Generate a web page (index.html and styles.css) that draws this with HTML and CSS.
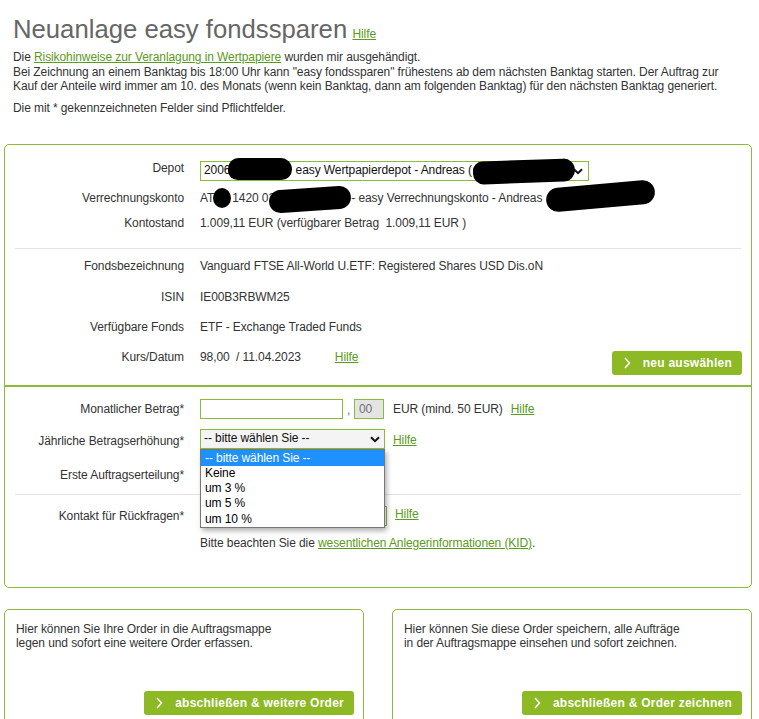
FILE: index.html
```html
<!DOCTYPE html>
<html lang="de">
<head>
<meta charset="utf-8">
<title>Neuanlage easy fondssparen</title>
<link rel="stylesheet" href="styles.css">
</head>
<body>
<div class="page">
  <div class="head">
    <h1 class="title">Neuanlage easy fondssparen</h1>
    <a class="link" href="#">Hilfe</a>
  </div>
  <p class="intro">Die <a class="link" href="#">Risikohinweise zur Veranlagung in Wertpapiere</a> wurden mir ausgehändigt.<br>Bei Zeichnung an einem Banktag bis 18:00 Uhr kann "easy fondssparen" frühestens ab dem nächsten Banktag starten. Der Auftrag zur<br>Kauf der Anteile wird immer am 10. des Monats (wenn kein Banktag, dann am folgenden Banktag) für den nächsten Banktag generiert.</p>
  <p class="note">Die mit * gekennzeichneten Felder sind Pflichtfelder.</p>

  <div class="card main">
    <div class="sec sec-top">
      <div class="row r-depot">
        <div class="label">Depot</div>
        <div class="value">
          <div class="select sel-depot">
            <span class="sel-text">2006<span class="gap gap-depot"></span> easy Wertpapierdepot - Andreas (</span>
            <svg class="chev" width="10" height="7" viewBox="0 0 10 7"><path d="M1 1.2 L5 5.2 L9 1.2" fill="none" stroke="#111" stroke-width="2"/></svg>
          </div>
          <i class="blob b1"></i>
          <i class="blob b2"></i>
        </div>
      </div>
      <div class="row r-verr">
        <div class="label">Verrechnungskonto</div>
        <div class="value">AT<span class="gap gap-at"></span>1420 02<span class="gap gap-iban"></span> - easy Verrechnungskonto - Andreas
          <i class="blob b3"></i>
          <i class="blob b4"></i>
          <i class="blob b5"></i>
        </div>
      </div>
      <div class="row r-konto">
        <div class="label">Kontostand</div>
        <div class="value">1.009,11 EUR (verfügbarer Betrag &nbsp;1.009,11 EUR )</div>
      </div>
      <div class="sep"></div>
      <div class="row r-std">
        <div class="label">Fondsbezeichnung</div>
        <div class="value">Vanguard FTSE All-World U.ETF: Registered Shares USD Dis.oN</div>
      </div>
      <div class="row r-std">
        <div class="label">ISIN</div>
        <div class="value">IE00B3RBWM25</div>
      </div>
      <div class="row r-std">
        <div class="label">Verfügbare Fonds</div>
        <div class="value">ETF - Exchange Traded Funds</div>
      </div>
      <div class="row r-kurs">
        <div class="label">Kurs/Datum</div>
        <div class="value kurs">
          <span>98,00 &nbsp;/ 11.04.2023</span>
          <a class="link kurs-help" href="#">Hilfe</a>
          <a class="btn btn-new" href="#"><svg class="btn-chev" width="7" height="12" viewBox="0 0 7 12"><path d="M1 1 L5.5 6 L1 11" fill="none" stroke="#fff" stroke-width="1.5"/></svg><span>neu auswählen</span></a>
        </div>
      </div>
    </div>

    <div class="sec sec-bottom">
      <div class="row r-monat">
        <div class="label">Monatlicher Betrag*</div>
        <div class="value inline">
          <span class="input in-amount"></span>
          <span class="comma">,</span>
          <span class="input in-cent">00</span>
          <span class="eur">EUR (mind. 50 EUR)</span>
          <a class="link" href="#">Hilfe</a>
        </div>
      </div>
      <div class="row r-jahr">
        <div class="label">Jährliche Betragserhöhung*</div>
        <div class="value inline">
          <div class="select-wrap">
            <div class="select sel-jahr">
              <span class="sel-text">-- bitte wählen Sie --</span>
              <svg class="chev" width="10" height="7" viewBox="0 0 10 7"><path d="M1 1.2 L5 5.2 L9 1.2" fill="none" stroke="#111" stroke-width="2"/></svg>
            </div>
            <ul class="dropdown">
              <li class="opt active">-- bitte wählen Sie --</li>
              <li class="opt">Keine</li>
              <li class="opt">um 3 %</li>
              <li class="opt">um 5 %</li>
              <li class="opt">um 10 %</li>
            </ul>
          </div>
          <a class="link help-jahr" href="#">Hilfe</a>
        </div>
      </div>
      <div class="row r-erste">
        <div class="label">Erste Auftragserteilung*</div>
        <div class="value inline">
          <div class="select sel-hidden"></div>
        </div>
      </div>
      <div class="sep sep-b"></div>
      <div class="row r-kontakt">
        <div class="label">Kontakt für Rückfragen*</div>
        <div class="value inline">
          <div class="select sel-kontakt"></div>
          <a class="link help-kontakt" href="#">Hilfe</a>
        </div>
      </div>
      <div class="row r-kid">
        <div class="label"></div>
        <div class="value">Bitte beachten Sie die <a class="link" href="#">wesentlichen Anlegerinformationen (KID)</a>.</div>
      </div>
    </div>
  </div>

  <div class="actions">
    <div class="card action">
      <p class="action-text">Hier können Sie Ihre Order in die Auftragsmappe<br>legen und sofort eine weitere Order erfassen.</p>
      <a class="btn" href="#"><svg class="btn-chev" width="7" height="12" viewBox="0 0 7 12"><path d="M1 1 L5.5 6 L1 11" fill="none" stroke="#fff" stroke-width="1.5"/></svg><span>abschließen &amp; weitere Order</span></a>
    </div>
    <div class="card action">
      <p class="action-text">Hier können Sie diese Order speichern, alle Aufträge<br>in der Auftragsmappe einsehen und sofort zeichnen.</p>
      <a class="btn" href="#"><svg class="btn-chev" width="7" height="12" viewBox="0 0 7 12"><path d="M1 1 L5.5 6 L1 11" fill="none" stroke="#fff" stroke-width="1.5"/></svg><span>abschließen &amp; Order zeichnen</span></a>
    </div>
  </div>
</div>
</body>
</html>
```

FILE: styles.css
```css
* { box-sizing: border-box; }
html, body { margin: 0; padding: 0; background: #fff; }
body {
  font-family: "Liberation Sans", Arial, sans-serif;
  font-size: 12px;
  letter-spacing: -0.09px;
  color: #333;
  width: 759px;
  overflow: hidden;
}
.page { padding: 0 7px 0 4px; }

.link { color: #5b9a21; text-decoration: underline; }

.head {
  margin: 14px 0 0 9px;
  height: 30px;
  line-height: 30px;
  white-space: nowrap;
}
.title {
  display: inline;
  font-size: 25.7px;
  font-weight: normal;
  letter-spacing: 0;
  color: #666;
  margin: 0 2px 0 0;
}
.head .link { font-size: 12px; }

.intro, .note {
  margin: 6px 0 0 9px;
  line-height: 14.5px;
}
.note { margin-top: 7px; }

.card {
  border: 1px solid #8dba3a;
  border-radius: 5px;
}
.main { margin-top: 29px; }

.sec-top { padding-top: 16px; }
.sec-bottom { border-top: 2px solid #8dba3a; padding: 12px 0 37px; }

.row {
  display: grid;
  grid-template-columns: 179px 1fr;
  column-gap: 16px;
  line-height: 14px;
}
.label { text-align: right; white-space: nowrap; }
.value { position: relative; white-space: nowrap; }

.r-depot { height: 30px; }
.r-verr, .r-konto { height: 25px; }
.r-std { height: 30px; }
.r-kurs { height: 36px; }
.r-std + .r-std, .r-std + .r-kurs { padding-top: 1px; }

.sep { height: 1px; background: #e3e3e3; margin: 7px 10px 10px; }
.sep-b { margin: 4px 10px 11px; }

.select {
  position: relative;
  height: 20px;
  border: 1px solid #8dba3a;
  background: #fff;
  display: flex;
  align-items: center;
  padding: 0 0 1px 3px;
  line-height: 17px;
  color: #111;
}
.sel-depot { width: 389px; }
.sel-jahr { width: 185px; background: #f4f4f4; }
.sel-hidden { width: 185px; }
.sel-kontakt { width: 187px; }
.chev { position: absolute; top: 6px; right: 4px; }
.sel-depot .chev { right: 5px; }

.gap { display: inline-block; }
.gap-depot { width: 62px; }
.gap-at { width: 18px; }
.gap-iban { width: 73px; }

.blob {
  position: absolute;
  background: #000;
  border-radius: 12px;
  z-index: 2;
}
.b1 { left: 28px; top: -3px; width: 64px; height: 22px; border-radius: 11px 12px 11px 10px; }
.b2 { left: 273px; top: -1px; width: 102px; height: 23px; border-radius: 10px 12px 12px 11px; transform: rotate(-2deg); }
.b3 { left: 13px; top: -3px; width: 18px; height: 20px; border-radius: 50%; }
.b4 { left: 69px; top: -3px; width: 82px; height: 23px; transform: rotate(-4deg); }
.b5 { left: 346px; top: -7px; width: 109px; height: 24px; transform: rotate(-5deg); }

.kurs { display: flex; align-items: flex-start; }
.kurs-help { margin-left: 34px; }
.btn {
  display: inline-flex;
  align-items: center;
  height: 24px;
  padding: 0 10px 0 12px;
  gap: 12px;
  background: #8cb924;
  border-radius: 3px;
  color: #fff;
  font-weight: bold;
  font-size: 12px;
  letter-spacing: 0.25px;
  text-decoration: none;
  white-space: nowrap;
}
.btn-chev { display: block; }
.btn-new { margin: 1px 9px 0 auto; }

.inline { display: flex; align-items: flex-start; }
.r-monat { height: 30px; }
.r-monat .label { padding-top: 3px; }
.r-monat .value > span, .r-monat .value > a { line-height: 14px; }
.input {
  display: block;
  height: 20px;
  border: 1px solid #8dba3a;
  background: #fff;
}
.in-amount { width: 143px; }
.comma { padding: 4px 0 0; width: 11px; text-align: center; color: #666; }
.in-cent {
  width: 30px;
  background: #e4e4e4;
  color: #707070;
  padding: 2px 0 0 4px;
  line-height: 14px;
}
.eur { margin: 3px 8px 0 9px; }
.r-monat .link { margin-top: 3px; }

.r-jahr { height: 34px; }
.r-jahr .label { padding-top: 5px; }
.select-wrap { position: relative; }
.help-jahr { margin: 4px 0 0 8px; }

.dropdown {
  position: absolute;
  top: 20px;
  left: 0;
  width: 185px;
  margin: 0;
  padding: 0;
  list-style: none;
  background: #fff;
  border: 1px solid #777;
  box-shadow: 2px 3px 5px rgba(0,0,0,0.3);
  z-index: 5;
  color: #000;
}
.opt { height: 15.2px; line-height: 15.2px; padding-left: 4px; }
.opt.active { background: #1e90ff; color: #fff; height: 16px; line-height: 16px; }

.r-erste { height: 27px; }
.r-erste .label { padding-top: 5px; }

.r-kontakt { height: 30px; }
.r-kontakt .label { padding-top: 3px; }
.help-kontakt { margin: 1px 0 0 8px; }

.actions {
  display: grid;
  grid-template-columns: 1fr 1fr;
  column-gap: 28px;
  margin-top: 21px;
}
.action {
  min-height: 140px;
  padding: 12px 9px 0 11px;
  display: flex;
  flex-direction: column;
}
.action-text { margin: 0; line-height: 14px; }
.action .btn { align-self: flex-end; margin-top: 41px; }
```
